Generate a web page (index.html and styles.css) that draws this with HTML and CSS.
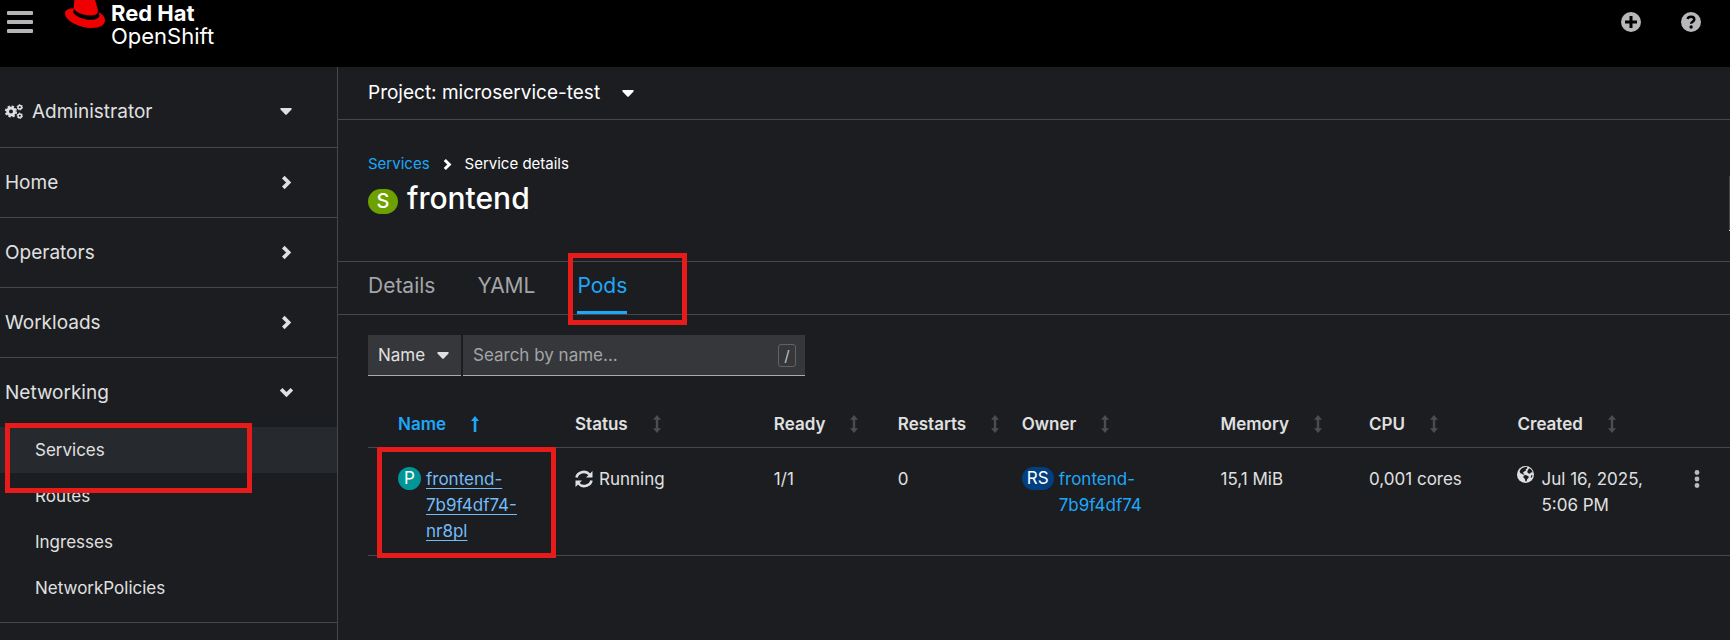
FILE: index.html
```html
<!DOCTYPE html>
<html lang="en">
<head>
<meta charset="utf-8">
<title>frontend · Service details · Red Hat OpenShift</title>
<link rel="stylesheet" href="styles.css">
</head>
<body>
<svg class="defs" aria-hidden="true">
  <symbol id="chevron" viewBox="0 0 10 14"><path d="M2 2l5 5-5 5" fill="none" stroke="currentColor" stroke-width="3.4"/></symbol>
  <symbol id="caret" viewBox="0 0 12 7"><path d="M1.2 0h9.600q1.600 .3.500 1.700L7 6.300q-1 1-2 0L.7 1.700Q-.4.3 1.200 0z" fill="currentColor"/></symbol>
  <symbol id="sort" viewBox="0 0 8 18"><path d="M4 0l4 4.700H5.200v8.600H8L4 18 0 13.300h2.800V4.700H0z" fill="currentColor"/></symbol>
  <symbol id="sort-up" viewBox="0 0 8 16"><path d="M4 0l4 5H5.300v11H2.700V5H0z" fill="currentColor"/></symbol>
</svg>
<header class="masthead">
  <button class="icon-btn menu-btn" aria-label="Global navigation"><span></span><span></span><span></span></button>
  <a class="brand" href="#">
    <svg class="hat" viewBox="0 0 40 34" aria-hidden="true"><path fill="#e00" d="M8.500 14.500C3 14.500 0 16 0 19.500 0 26.500 14 34 27 34c8 0 13-3 13-7.500 0-3.500-2.500-6.500-6.500-8.500L30.500 7.500C30 5.500 29 4.500 26 3L20 .500C16 0 15 2 12.500 2c-2 0-2.500 1-3 3z"/><path fill="#000" d="M9 14.300l-.9 3.700C9.500 22 18 25.800 26 25.800c5.500 0 8.800-1.600 8.400-5L33.600 17.500l-.9-.3c.3 3.200-3 4.300-7.200 4.300C18 21.500 9.500 18 9 14.300z"/></svg>
    <span class="brand-text"><strong>Red Hat</strong><span>OpenShift</span></span>
  </a>
  <div class="tools">
    <button class="icon-btn" aria-label="Import YAML"><svg width="20" height="20" viewBox="0 0 20 20"><circle cx="10" cy="10" r="10" fill="#b8b8ba"/><path d="M10 4v12M4 10h12" stroke="#000" stroke-width="3"/></svg></button>
    <button class="icon-btn" aria-label="Help"><svg width="20" height="20" viewBox="0 0 20 20"><circle cx="10" cy="10" r="10" fill="#b8b8ba"/><path d="M6.700 7C7.300 3.900 13.300 3.900 13.300 7.400c0 2.400-3.200 2.300-3.200 4.400" fill="none" stroke="#000" stroke-width="2.500"/><circle cx="10.100" cy="15" r="1.700"/></svg></button>
  </div>
</header>
<div class="shell">
  <nav class="sidebar" aria-label="Main">
    <button class="nav-row perspective">
      <svg width="18" height="15" viewBox="0 0 18 15" aria-hidden="true"><g fill="none" stroke="currentColor"><circle cx="6" cy="7.500" r="3.400" stroke-width="2.800"/><circle cx="6" cy="7.500" r="5.200" stroke-width="1.800" stroke-dasharray="2.400 1.684"/><circle cx="14.800" cy="3.200" r="1.800" stroke-width="1.500"/><circle cx="14.800" cy="3.200" r="2.700" stroke-width="1" stroke-dasharray="1.400 1.427"/><circle cx="14.800" cy="11.800" r="1.800" stroke-width="1.500"/><circle cx="14.800" cy="11.800" r="2.700" stroke-width="1" stroke-dasharray="1.400 1.427"/></g></svg>
      <span>Administrator</span><svg class="caret"><use href="#caret"/></svg>
    </button>
    <button class="nav-row"><span>Home</span><svg class="chev"><use href="#chevron"/></svg></button>
    <button class="nav-row"><span>Operators</span><svg class="chev"><use href="#chevron"/></svg></button>
    <button class="nav-row"><span>Workloads</span><svg class="chev"><use href="#chevron"/></svg></button>
    <div class="nav-group">
      <button class="nav-row open" aria-expanded="true"><span>Networking</span><svg class="chev"><use href="#chevron"/></svg></button>
      <a class="nav-link current" href="#" aria-current="page">Services</a>
      <a class="nav-link" href="#">Routes</a>
      <a class="nav-link" href="#">Ingresses</a>
      <a class="nav-link" href="#">NetworkPolicies</a>
      <span class="mark mark-nav"></span>
    </div>
  </nav>
  <main class="content">
    <div class="project-bar"><button class="project">Project: microservice-test<svg class="caret"><use href="#caret"/></svg></button></div>
    <div class="heading">
      <div>
        <nav class="crumbs" aria-label="Breadcrumb"><a href="#">Services</a><svg class="chev small"><use href="#chevron"/></svg><span>Service details</span></nav>
        <h1><span class="badge service">S</span>frontend</h1>
      </div>
      <button class="actions" aria-label="Actions"></button>
    </div>
    <nav class="tabs" aria-label="Service">
      <a href="#">Details</a><a href="#">YAML</a>
      <span class="marked"><a class="active" href="#" aria-current="page">Pods</a><span class="mark mark-tab"></span></span>
    </nav>
    <div class="filters">
      <button class="filter-by">Name<svg class="caret"><use href="#caret"/></svg></button>
      <div class="search"><input type="text" placeholder="Search by name..." aria-label="Search by name"><kbd>/</kbd></div>
    </div>
    <table class="pods">
      <colgroup><col class="c-name"><col class="c-status"><col class="c-ready"><col class="c-restarts"><col class="c-owner"><col class="c-memory"><col class="c-cpu"><col class="c-created"><col></colgroup>
      <thead><tr>
        <th><button class="sorted">Name<svg class="sort"><use href="#sort-up"/></svg></button></th>
        <th><button>Status<svg class="sort"><use href="#sort"/></svg></button></th>
        <th><button>Ready<svg class="sort"><use href="#sort"/></svg></button></th>
        <th><button>Restarts<svg class="sort"><use href="#sort"/></svg></button></th>
        <th><button>Owner<svg class="sort"><use href="#sort"/></svg></button></th>
        <th><button>Memory<svg class="sort"><use href="#sort"/></svg></button></th>
        <th><button>CPU<svg class="sort"><use href="#sort"/></svg></button></th>
        <th><button>Created<svg class="sort"><use href="#sort"/></svg></button></th>
        <th></th>
      </tr></thead>
      <tbody><tr>
        <td class="marked"><div class="res"><span class="badge pod">P</span><a class="hovered" href="#">frontend-<br>7b9f4df74-<br>nr8pl</a></div><span class="mark mark-pod"></span></td>
        <td><div class="status"><svg width="18" height="18" viewBox="0 0 18 18" aria-hidden="true"><path d="M1.500 7.500C2.500 2.500 10-.5 14.500 4.500M16.500 10.500C15.500 15.500 8 18.500 3.500 13.500" fill="none" stroke="currentColor" stroke-width="2.600"/><path d="M17.500 1v6.500H11zM.5 17v-6.500H7z" fill="currentColor"/></svg>Running</div></td>
        <td>1/1</td>
        <td>0</td>
        <td><div class="res"><span class="badge rs">RS</span><a href="#">frontend-<br>7b9f4df74</a></div></td>
        <td>15,1 MiB</td>
        <td>0,001 cores</td>
        <td><div class="created"><svg width="17" height="17" viewBox="0 0 17 17" aria-hidden="true"><circle cx="8.500" cy="8.500" r="8.500" fill="currentColor"/><path fill="#1b1d21" d="M7.200 1.200l2.600-.4.6 1.400-1.600 1 .2 1.300-1.800 1.100-1.400 1.500 1.200.6.400 1.200-1.800-.6L3.200 7 2.600 5l1.800-2.500zM10.800 4.200l1.400-2 2 1.300 1.500 2.700-1.800.2-1 1.400-1.700-.6-1-1.200zM6.800 9.600l2-.6 2.700 1.300.2 1.400-1.600 1.600-.5 2-1.200.3-.6-2.800L6.300 11.600zM14 9.500l1.600-.5-.6 2.300-1.200.8z"/></svg><span>Jul 16, 2025,<br>5:06 PM</span></div></td>
        <td><button class="kebab" aria-label="Pod actions"><svg width="6" height="18" viewBox="0 0 6 18"><g fill="#b8bbbe"><circle cx="3" cy="2.500" r="2.400"/><circle cx="3" cy="9" r="2.400"/><circle cx="3" cy="15.500" r="2.400"/></g></svg></button></td>
      </tr></tbody>
    </table>
  </main>
</div>
</body>
</html>
```
FILE: styles.css
```css
* { box-sizing: border-box; }
body {
  margin: 0;
  min-height: 100vh;
  display: flex;
  flex-direction: column;
  background: #1b1d21;
  color: #e0e0e0;
  font: 17px/26px Inter, "Open Sans", sans-serif;
  overflow-x: hidden;
}
button { padding: 0; border: 0; background: none; color: inherit; font: inherit; text-align: left; cursor: pointer; }
a { color: #1fa7f8; text-decoration: none; }
svg { flex: none; }
.defs { position: absolute; width: 0; height: 0; }
.caret { width: 12px; height: 7px; }
.chev { width: 11px; height: 15px; }
.chev.small { width: 9px; height: 13px; }

.masthead { display: flex; align-items: flex-start; height: 67px; padding: 0 29px 0 7px; background: #000; }
.menu-btn { display: flex; flex-direction: column; gap: 5px; margin-top: 11px; }
.menu-btn span { width: 26px; height: 4px; border-radius: 1px; background: #b4b4b6; }
.brand { display: flex; gap: 6px; margin-left: 32px; color: #fff; }
.hat { width: 40px; height: 34px; margin-top: -6px; }
.brand-text { display: flex; flex-direction: column; padding-top: 2px; font-size: 22px; line-height: 23px; }
.tools { display: flex; gap: 40px; margin: 12px 0 0 auto; }
.tools svg { display: block; }

.shell { display: flex; flex: 1; }
.sidebar { flex: none; width: 338px; border-right: 1px solid #45474b; }
.nav-row { display: flex; align-items: center; width: 100%; height: 70px; padding: 0 45px 0 5px; border-bottom: 1px solid #45474b; font-size: 19px; }
.nav-row .chev, .nav-row .caret { margin-left: auto; }
.perspective { height: 81px; padding-top: 9px; gap: 9px; }
.open { height: 69px; border-bottom: 0; }
.open .chev { transform: rotate(90deg); }
.nav-group { position: relative; padding-bottom: 11px; border-bottom: 1px solid #45474b; }
.nav-link { display: flex; align-items: center; height: 46px; padding-left: 35px; color: #e0e0e0; }
.nav-link.current { background: #26292d; }

.mark { position: absolute; border: 5px solid #e81b1b; pointer-events: none; }
.mark-nav { left: 5px; top: 65px; width: 247px; height: 70px; }
.marked { position: relative; }
.mark-tab { left: -9px; top: -9px; width: 119px; height: 72px; }
.mark-pod { left: 9px; top: -1px; width: 179px; height: 111px; }

.content { flex: 1; min-width: 0; color: #e0e0e0; }
.project-bar { display: flex; height: 53px; padding-left: 30px; border-bottom: 1px solid #45474b; }
.project { display: flex; align-items: center; gap: 22px; color: #fff; font-size: 19px; }
.heading { display: flex; justify-content: space-between; align-items: flex-start; height: 141px; padding: 32px 0 0 30px; }
.crumbs { display: flex; align-items: center; gap: 13px; color: #fff; font-size: 15px; line-height: 24px; }
h1 { display: flex; align-items: center; gap: 9px; margin: 2px 0 0; color: #fff; font-size: 30px; font-weight: 500; line-height: 40px; }
.actions { width: 1px; height: 55px; margin-top: 24px; background: #45474b; border-bottom: 1px solid #d2d2d2; }
.badge { display: inline-block; border-radius: 20px; color: #fff; text-align: center; }
.service { width: 30px; height: 25px; margin-top: 6px; background: #6ca100; font-size: 20px; font-weight: 500; line-height: 25px; }
.pod { width: 23px; height: 23px; background: #009596; line-height: 23px; }
.rs { width: 32px; height: 23px; background: #004080; line-height: 23px; }

.tabs { display: flex; gap: 42px; height: 54px; padding-left: 30px; border-top: 1px solid #45474b; border-bottom: 1px solid #45474b; font-size: 21px; }
.tabs a { display: block; height: 52px; color: #a3a5a8; line-height: 48px; }
.tabs a.active { color: #1fa7f8; border-bottom: 3px solid #1fa7f8; }
.filters { display: flex; gap: 2px; padding: 20px 0 0 30px; }
.filter-by, .search { display: flex; align-items: center; height: 41px; background: #36373a; border-bottom: 1px solid #aaabac; }
.filter-by { width: 93px; gap: 12px; padding-left: 10px; }
.search { width: 342px; padding: 0 9px 0 10px; }
.search input { flex: 1; min-width: 0; padding: 0; border: 0; outline: 0; background: none; color: #e0e0e0; font: inherit; }
.search input::placeholder { color: #a3a5a8; opacity: 1; }
kbd { width: 18px; height: 23px; border: 1px solid #606266; border-radius: 3px; color: #c0c2c4; font: inherit; font-size: 15px; line-height: 21px; text-align: center; }

.pods { width: calc(100% - 30px); margin: 24px 0 0 30px; border-collapse: separate; border-spacing: 0; table-layout: fixed; }
.pods th, .pods td { padding: 0; border-bottom: 1px solid #45474b; text-align: left; vertical-align: top; }
.pods th:first-child, .pods td:first-child { padding-left: 30px; }
.pods th { height: 48px; padding-top: 11px; }
.pods th button { display: flex; align-items: center; gap: 25px; font-weight: 600; font-size: 17px; }
.pods td { height: 108px; padding-top: 18px; }
.sort { width: 8px; height: 18px; color: #4b4d50; }
.pods .sorted, .sorted .sort { color: #1fa7f8; }
.c-name { width: 15.2%; }
.c-status { width: 14.6%; }
.c-ready, .c-restarts { width: 9.1%; }
.c-owner { width: 14.6%; }
.c-memory, .c-cpu { width: 10.9%; }
.c-created { width: 12.2%; }
.res { display: flex; gap: 5px; }
.res .badge { flex: none; margin-top: 1px; }
.hovered { color: #73bcf7; text-decoration: underline; text-underline-offset: 3px; }
.status { display: flex; align-items: center; gap: 6px; }
.created { display: flex; gap: 7px; }
.kebab { display: block; padding: 4px 10px; }
.kebab svg { display: block; }
```
